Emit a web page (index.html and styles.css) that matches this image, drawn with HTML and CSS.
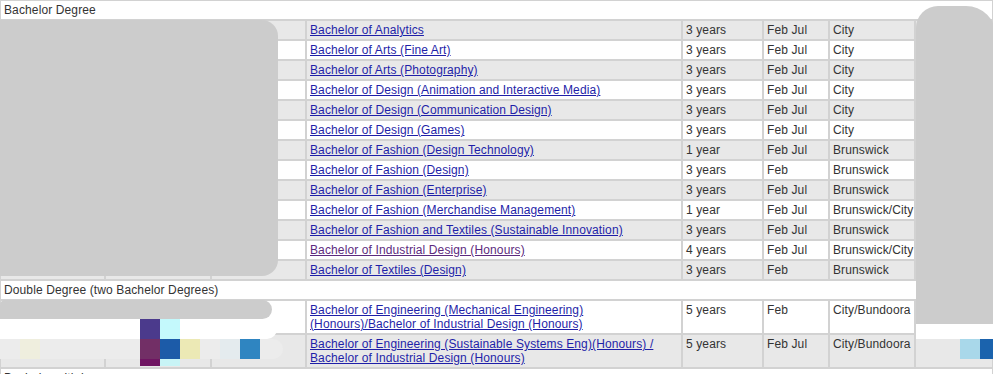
FILE: index.html
```html
<!DOCTYPE html>
<html>
<head>
<meta charset="utf-8">
<title>Courses</title>
<link rel="stylesheet" href="styles.css">
</head>
<body>
<div class="page">
<table class="courses">
  <colgroup>
    <col class="c1"><col class="c2"><col class="c3"><col class="c4"><col class="c5"><col class="c6"><col class="c7"><col class="c8">
  </colgroup>
  <tbody>
    <tr class="group"><td colspan="8">Bachelor Degree</td></tr>
    <tr class="alt"><td></td><td></td><td></td><td><a href="#">Bachelor of Analytics</a></td><td>3 years</td><td>Feb Jul</td><td>City</td><td></td></tr>
    <tr><td></td><td></td><td></td><td><a href="#">Bachelor of Arts (Fine Art)</a></td><td>3 years</td><td>Feb Jul</td><td>City</td><td></td></tr>
    <tr class="alt"><td></td><td></td><td></td><td><a href="#">Bachelor of Arts (Photography)</a></td><td>3 years</td><td>Feb Jul</td><td>City</td><td></td></tr>
    <tr><td></td><td></td><td></td><td><a href="#">Bachelor of Design (Animation and Interactive Media)</a></td><td>3 years</td><td>Feb Jul</td><td>City</td><td></td></tr>
    <tr class="alt"><td></td><td></td><td></td><td><a href="#">Bachelor of Design (Communication Design)</a></td><td>3 years</td><td>Feb Jul</td><td>City</td><td></td></tr>
    <tr><td></td><td></td><td></td><td><a href="#">Bachelor of Design (Games)</a></td><td>3 years</td><td>Feb Jul</td><td>City</td><td></td></tr>
    <tr class="alt"><td></td><td></td><td></td><td><a href="#">Bachelor of Fashion (Design Technology)</a></td><td>1 year</td><td>Feb Jul</td><td>Brunswick</td><td></td></tr>
    <tr><td></td><td></td><td></td><td><a href="#">Bachelor of Fashion (Design)</a></td><td>3 years</td><td>Feb</td><td>Brunswick</td><td></td></tr>
    <tr class="alt"><td></td><td></td><td></td><td><a href="#">Bachelor of Fashion (Enterprise)</a></td><td>3 years</td><td>Feb Jul</td><td>Brunswick</td><td></td></tr>
    <tr><td></td><td></td><td></td><td><a href="#">Bachelor of Fashion (Merchandise Management)</a></td><td>1 year</td><td>Feb Jul</td><td>Brunswick/City</td><td></td></tr>
    <tr class="alt"><td></td><td></td><td></td><td><a href="#">Bachelor of Fashion and Textiles (Sustainable Innovation)</a></td><td>3 years</td><td>Feb Jul</td><td>Brunswick</td><td></td></tr>
    <tr><td></td><td></td><td></td><td><a href="#" class="visited">Bachelor of Industrial Design (Honours)</a></td><td>4 years</td><td>Feb Jul</td><td>Brunswick/City</td><td></td></tr>
    <tr class="alt"><td></td><td></td><td></td><td><a href="#">Bachelor of Textiles (Design)</a></td><td>3 years</td><td>Feb</td><td>Brunswick</td><td></td></tr>
    <tr class="group"><td colspan="8">Double Degree (two Bachelor Degrees)</td></tr>
    <tr><td></td><td></td><td></td><td><a href="#">Bachelor of Engineering (Mechanical Engineering) <span class="nobr">(Honours)/Bachelor</span> of Industrial Design (Honours)</a></td><td>5 years</td><td>Feb</td><td>City/Bundoora</td><td></td></tr>
    <tr class="alt"><td></td><td></td><td></td><td><a href="#">Bachelor of Engineering (Sustainable Systems Eng)(Honours) / Bachelor of Industrial Design (Honours)</a></td><td>5 years</td><td>Feb Jul</td><td>City/Bundoora</td><td></td></tr>
    <tr class="group"><td colspan="8">Bachelor with honours</td></tr>
  </tbody>
</table>

<div class="blur blur-left"></div>
<div class="blur blur-right"></div>
<div class="blur cloud-double"></div>
<div class="wash wash-white"></div>
<div class="wash wash-grey"></div>
<div class="wash wash-right"></div>
<div class="px" style="left:140px;top:319px;background:#4b3a8c"></div>
<div class="px" style="left:160px;top:319px;background:#c4f9fc"></div>
<div class="px" style="left:140px;top:339px;background:#722f66"></div>
<div class="px" style="left:160px;top:339px;background:#1c5ba8"></div>
<div class="px" style="left:180px;top:339px;background:#ece9b5"></div>
<div class="px" style="left:220px;top:339px;background:#e4ebee"></div>
<div class="px" style="left:240px;top:339px;background:#2f85c1"></div>
<div class="px" style="left:20px;top:339px;background:#efeede"></div>
<div class="px short" style="left:140px;top:359px;background:#6f1562"></div>
<div class="px short" style="left:160px;top:359px;background:#c8f4f6"></div>
<div class="px" style="left:960px;top:339px;background:#a9d8ea"></div>
<div class="px" style="left:980px;top:339px;background:#1b63ad"></div>
</div>
</body>
</html>
```
FILE: styles.css
```css
html, body {
  margin: 0;
  padding: 0;
  background: #fff;
}

.page {
  position: relative;
  width: 993px;
  overflow: hidden;
  height: 374px;
}

.courses {
  width: 993px;
  table-layout: fixed;
  border-collapse: separate;
  border-spacing: 0;
  font-family: "Liberation Sans", Arial, sans-serif;
  font-size: 12px;
  line-height: 14px;
  letter-spacing: 0.12px;
  color: #333;
}

.c1 { width: 105px; }
.c2 { width: 106px; }
.c3 { width: 95px; }
.c4 { width: 376px; }
.c5 { width: 81px; }
.c6 { width: 66px; }
.c7 { width: 86px; }
.c8 { width: 78px; }

.courses td {
  border: 1px solid #d2d2d2;
  padding: 2px 3px;
  vertical-align: top;
  white-space: nowrap;
  overflow: hidden;
}

.courses td:nth-child(4) {
  white-space: normal;
}

.courses tr.group td {
  background: #fff;
  white-space: nowrap;
}

.courses tr.alt td {
  background: #e8e8e8;
}

.courses a {
  color: #1f1fa8;
  text-decoration: underline;
}

.courses a.visited {
  color: #5c2a7e;
}

.nobr {
  white-space: nowrap;
}

/* redaction overlays */
.blur {
  position: absolute;
  background: #cccccc;
}

.blur-left {
  left: 0;
  top: 20px;
  width: 278px;
  height: 256px;
  border-radius: 0 16px 16px 0;
}

.blur-right {
  left: 916px;
  top: 6px;
  width: 80px;
  height: 318px;
  border-radius: 22px 30px 0 0;
}

.cloud-double {
  left: 0;
  top: 300px;
  width: 272px;
  height: 19px;
  border-radius: 6px 12px 12px 0;
}

.wash {
  position: absolute;
}

.wash-white {
  left: 0;
  top: 319px;
  width: 277px;
  height: 20px;
  background: #fff;
  border-radius: 0 10px 10px 0;
}

.wash-grey {
  left: 0;
  top: 339px;
  width: 283px;
  height: 20px;
  background: #ececec;
  border-radius: 0 10px 10px 0;
}

.wash-right {
  left: 916px;
  top: 324px;
  width: 80px;
  height: 15px;
  background: #fff;
}

.px {
  position: absolute;
  width: 20px;
  height: 20px;
}

.px.short {
  height: 7px;
}
```
